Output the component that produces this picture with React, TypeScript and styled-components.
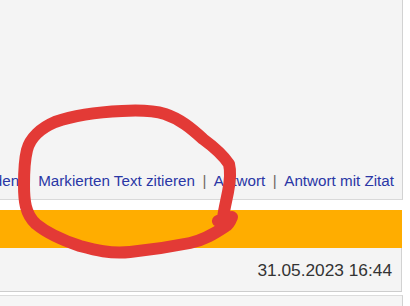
import React from "react";
import styled, { createGlobalStyle } from "styled-components";

const Global = createGlobalStyle`
  html, body { margin: 0; padding: 0; background: #ffffff; }
  body { font-family: "Liberation Sans", Arial, Helvetica, sans-serif; }
  #root { width: 410px; height: 306px; overflow: hidden; }
`;

const Page = styled.div`
  position: relative;
  width: 410px;
  height: 306px;
  overflow: hidden;
  background: #ffffff;
  display: flex;
  flex-direction: column;
`;

const PostPanel = styled.div`
  width: 402px;
  height: 199px;
  flex: none;
  background: #f4f4f4;
  border-right: 1px solid #d2d2d2;
  border-bottom: 1px solid #d9d9d9;
  display: flex;
  align-items: flex-end;
  justify-content: flex-end;
  overflow: hidden;
`;

const ActionRow = styled.div`
  display: flex;
  align-items: center;
  white-space: nowrap;
  padding: 0 8px 10px 0;
  font-size: 15.2px;
  line-height: 16px;
`;

const ActionLink = styled.a`
  color: #2a37a6;
  text-decoration: none;
`;

const Sep = styled.span`
  color: #6f6762;
  margin: 0 7.5px;
`;

const Gap = styled.div<{ $h: number }>`
  height: ${(p) => p.$h}px;
  flex: none;
`;

const HeaderBar = styled.div`
  width: 402px;
  height: 38px;
  background: #ffad00;
  flex: none;
`;

const MetaRow = styled.div`
  width: 402px;
  height: 44px;
  box-sizing: border-box;
  background: #f4f4f4;
  border-right: 1px solid #d2d2d2;
  border-bottom: 1px solid #cdcdcd;
  display: flex;
  justify-content: flex-end;
  align-items: flex-start;
  padding: 12px 9px 0 0;
  flex: none;
`;

const DateText = styled.span`
  color: #333333;
  font-size: 17.3px;
  line-height: 20px;
`;

const NextPanel = styled.div`
  width: 402px;
  height: 20px;
  background: #f5f5f5;
  border-top: 1px solid #dcdcdc;
  border-right: 1px solid #d2d2d2;
  flex: none;
`;

const Annotation = styled.svg`
  position: absolute;
  left: 0;
  top: 0;
  pointer-events: none;
`;

const actions = ["Beitrag melden", "Markierten Text zitieren", "Antwort", "Antwort mit Zitat"];

export default function App() {
  return (
    <>
      <Global />
      <Page>
        <PostPanel>
          <ActionRow>
            {actions.map((a, i) => (
              <React.Fragment key={a}>
                {i > 0 && <Sep>|</Sep>}
                <ActionLink href="#">{a}</ActionLink>
              </React.Fragment>
            ))}
          </ActionRow>
        </PostPanel>
        <Gap $h={10} />
        <HeaderBar />
        <MetaRow>
          <DateText>31.05.2023 16:44</DateText>
        </MetaRow>
        <Gap $h={3} />
        <NextPanel />
        <Annotation width="410" height="306" viewBox="0 0 410 306">
          <path
            d="M218 221 C224 219 229 218 232 217 C230 222 228 225 226 226 C214 234 204 240 190 243 C170 247 150 250 130 252 C110 254 95 250 80 246 C62 240 48 234 36 224 C25 214 24 200 24 185 C24 170 25 158 27 150 C30 138 41 128 55 122 C75 115 100 112 122 111 C140 110 155 111 165 114 C180 119 191 128 203 139 C214 147 223 155 229 164 C231 172 230 182 228 192 C226 202 224 210 223 218"
            fill="none"
            stroke="#e33a36"
            strokeWidth="12"
            strokeLinecap="round"
            strokeLinejoin="round"
          />
        </Annotation>
      </Page>
    </>
  );
}
